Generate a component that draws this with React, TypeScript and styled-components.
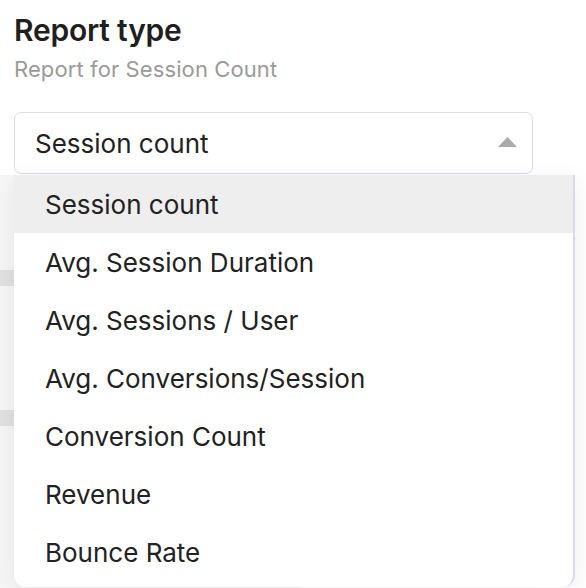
import React from 'react';
import styled, { createGlobalStyle } from 'styled-components';

const GlobalStyle = createGlobalStyle`
  html, body {
    margin: 0;
    padding: 0;
    background: #ffffff;
  }
  body {
    font-family: Inter, 'Liberation Sans', sans-serif;
    color: #222222;
  }
`;

const OPTIONS = [
  'Session count',
  'Avg. Session Duration',
  'Avg. Sessions / User',
  'Avg. Conversions/Session',
  'Conversion Count',
  'Revenue',
  'Bounce Rate',
];

export default function App() {
  const selected = OPTIONS[0];

  return (
    <>
      <GlobalStyle />
      <Page>
        <Title>Report type</Title>
        <Subtitle>Report for Session Count</Subtitle>

        <Field>
          <SelectBox>
            <SelectValue>{selected}</SelectValue>
            <Caret width="19" height="10" viewBox="0 0 19 10">
              <path d="M9.5 0 L19 10 L0 10 Z" fill="#ababab" />
            </Caret>
          </SelectBox>

          <Menu>
            {OPTIONS.map((opt) => (
              <Option key={opt} $active={opt === selected}>
                {opt}
              </Option>
            ))}
          </Menu>
        </Field>

        {/* placeholder rows of the panel sitting under the open menu */}
        <Backdrop>
          <SkeletonBar />
          <SkeletonBar />
        </Backdrop>
      </Page>
    </>
  );
}

const Page = styled.div`
  display: flex;
  flex-direction: column;
  align-items: flex-start;
  width: 586px;
  height: 588px;
  overflow: hidden;
  padding: 12px 14px 0;
  box-sizing: border-box;
`;

const Title = styled.h2`
  margin: 0;
  font-size: 30px;
  line-height: 36px;
  font-weight: 600;
  letter-spacing: -0.2px;
  color: #1f1f1f;
`;

const Subtitle = styled.p`
  margin: 8px 0 0;
  font-size: 22px;
  line-height: 26px;
  letter-spacing: 0.1px;
  color: #9a9a9a;
`;

const Field = styled.div`
  position: relative;
  z-index: 2;
  margin-top: 30px;
  width: 519px;
`;

const SelectBox = styled.div`
  display: flex;
  align-items: center;
  justify-content: space-between;
  height: 62px;
  box-sizing: border-box;
  padding: 0 15px 0 20px;
  background: #ffffff;
  border: 1.5px solid #d9ddeb;
  border-radius: 7px;
`;

const SelectValue = styled.span`
  font-size: 26px;
  color: #222222;
`;

const Caret = styled.svg`
  display: block;
  margin-top: -3px;
`;

const Menu = styled.ul`
  position: absolute;
  top: 63px;
  left: 0;
  width: 561px;
  margin: 0;
  padding: 0 0 6px;
  list-style: none;
  background: #ffffff;
  border-right: 2px solid #d6dbec;
  border-radius: 0 0 12px 12px;
  box-shadow: 0 6px 26px rgba(0, 0, 0, 0.07);
  box-sizing: border-box;
`;

const Option = styled.li<{ $active?: boolean }>`
  display: flex;
  align-items: center;
  height: 58px;
  padding-left: 31px;
  font-size: 26px;
  color: #222222;
  background: ${({ $active }) => ($active ? '#eeeeee' : 'transparent')};
`;

const Backdrop = styled.div`
  display: flex;
  flex-direction: column;
  gap: 124px;
  margin: 1px -14px 0;
  padding-top: 95px;
  width: 300px;
  height: 440px;
  box-sizing: border-box;
  background: #f6f6f6;
`;

const SkeletonBar = styled.div`
  height: 16px;
  background: #e1e1e1;
`;
